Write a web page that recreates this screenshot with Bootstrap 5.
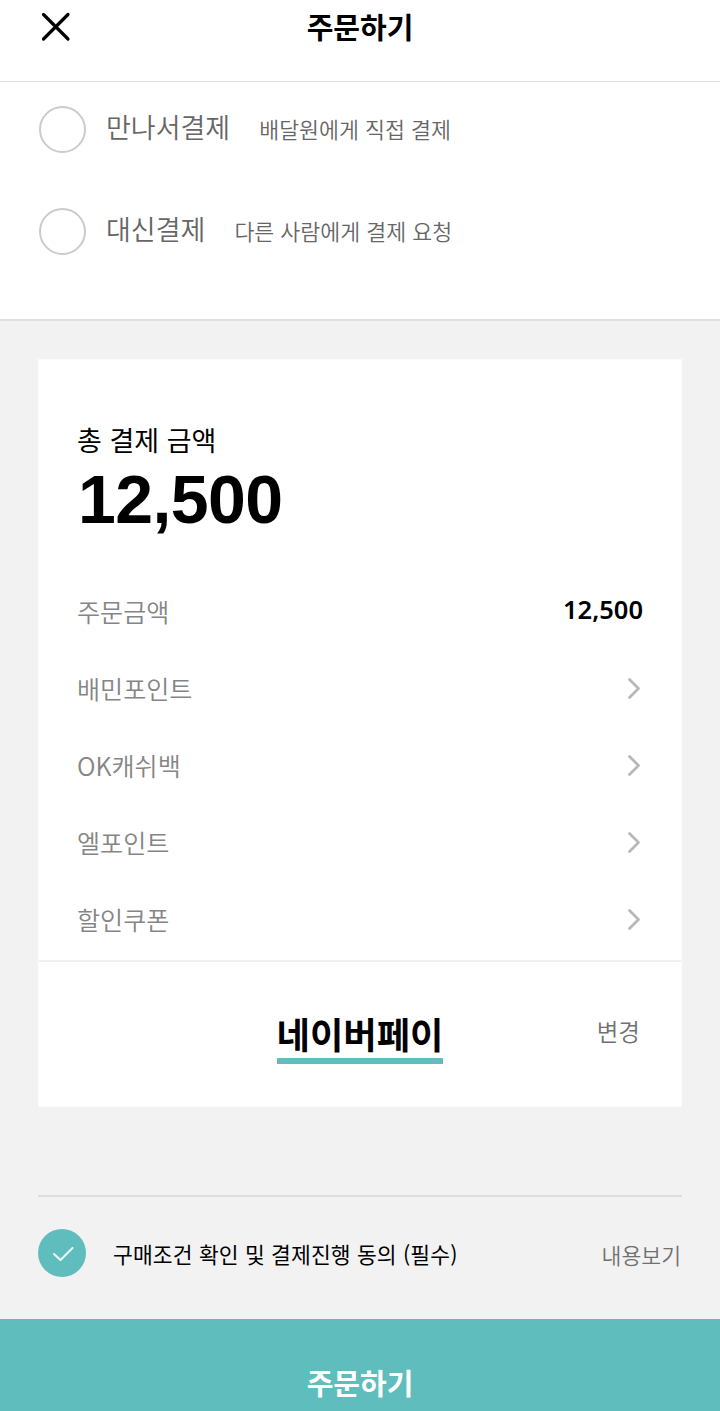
<!DOCTYPE html>
<html lang="ko">
<head>
<meta charset="utf-8">
<meta name="viewport" content="width=device-width, initial-scale=1">
<title>주문하기</title>
<link href="https://cdn.jsdelivr.net/npm/bootstrap@5.3.0/dist/css/bootstrap.min.css" rel="stylesheet">
<style>
body{font-family:"Noto Sans CJK KR","Noto Sans",sans-serif;background:#f2f2f2;color:#000;font-weight:350;line-height:1.5;overflow-x:hidden}
svg{display:block;fill:none;stroke-linecap:round;stroke-linejoin:round;flex:none}
.topbar{display:grid;grid-template-columns:1fr auto 1fr;height:82px;padding:6px 41px 0;border-bottom:1px solid #dedede}
.close-icon{margin-top:6px}
.bar-title{font-size:29px;line-height:40px;font-weight:700}
.pay-methods{height:239px;padding:24px 39px 0;border-bottom:2px solid #dfdfdf}
.pay-option{height:47px;margin-bottom:55px}
.ring{width:47px;height:47px;border:2px solid #cbcbcb;border-radius:50%;flex:none}
.pay-name{font-size:27px;line-height:42px;margin-left:20px;color:#666}
.pay-desc{font-size:21.7px;line-height:45px;margin-left:29px;color:#666}
.bill{margin:38px 38px 0;height:748px;border:1px solid #fbfbfb}
.bill-main{height:602px;padding:60px 38px 0;border-bottom:2px solid #f0f0f0}
.bill-label{font-size:27px;line-height:40px;font-weight:400}
.bill-total{font-family:"Liberation Sans",Arial,sans-serif;font-weight:700;font-size:68px;line-height:78px;letter-spacing:-.6px;margin-left:1px}
.bill-rows{margin-top:53px}
.bill-row{height:77px;font-size:25.1px;line-height:40px;color:#858585}
.bill-price{font-family:"Noto Sans",sans-serif;font-weight:600;font-size:25.5px;line-height:37px;color:#000}
.bill-change{display:grid;grid-template-columns:1fr auto 1fr;padding:46px 41px 0}
.pay-brand{font-size:36.3px;line-height:50px;font-weight:700;border-bottom:6px solid #5fbdbd;height:56px}
.change-link{font-size:23.5px;line-height:46px;color:#707070}
.agree{margin:88px 38px 0;height:124px;border-top:2px solid #dedede;padding-top:32px}
.tick{width:48px;height:48px;border-radius:50%;background:#5fbdbd;flex:none}
.agree-text{font-size:21.5px;line-height:50px;margin-left:27px;font-weight:400;letter-spacing:.15px}
.agree-more{font-size:21.6px;line-height:52px;color:#707070;margin-right:1px}
.order-btn{height:92px;background:#5fbdbd;color:#fff;padding-top:43px;overflow:hidden}
</style>
</head>
<body>
<header class="topbar bg-white">
  <svg class="close-icon" width="30" height="30" viewBox="0 0 30 30" stroke="#000" stroke-width="3.2"><path d="M2.5 2.5 27 27M27 2.5 2.5 27"/></svg>
  <div class="bar-title">주문하기</div>
</header>
<section class="pay-methods bg-white">
  <div class="pay-option d-flex"><span class="ring"></span><span class="pay-name">만나서결제</span><span class="pay-desc">배달원에게 직접 결제</span></div>
  <div class="pay-option d-flex"><span class="ring"></span><span class="pay-name">대신결제</span><span class="pay-desc">다른 사람에게 결제 요청</span></div>
</section>
<main>
  <section class="bill bg-white">
    <div class="bill-main">
      <div class="bill-label">총 결제 금액</div>
      <div class="bill-total">12,500</div>
      <div class="bill-rows">
        <div class="bill-row d-flex justify-content-between"><span>주문금액</span><span class="bill-price">12,500</span></div>
        <div class="bill-row d-flex justify-content-between"><span>배민포인트</span><svg width="16" height="40" stroke="#b8b8b8" stroke-width="2.8"><path d="M2.5 11.5 11.5 20.5 2.5 29.5"/></svg></div>
        <div class="bill-row d-flex justify-content-between"><span>OK캐쉬백</span><svg width="16" height="40" stroke="#b8b8b8" stroke-width="2.8"><path d="M2.5 11.5 11.5 20.5 2.5 29.5"/></svg></div>
        <div class="bill-row d-flex justify-content-between"><span>엘포인트</span><svg width="16" height="40" stroke="#b8b8b8" stroke-width="2.8"><path d="M2.5 11.5 11.5 20.5 2.5 29.5"/></svg></div>
        <div class="bill-row d-flex justify-content-between"><span>할인쿠폰</span><svg width="16" height="40" stroke="#b8b8b8" stroke-width="2.8"><path d="M2.5 11.5 11.5 20.5 2.5 29.5"/></svg></div>
      </div>
    </div>
    <div class="bill-change">
      <span></span><div class="pay-brand">네이버페이</div><div class="change-link text-end">변경</div>
    </div>
  </section>
  <section class="agree d-flex">
    <span class="tick d-flex align-items-center justify-content-center"><svg width="24" height="18" viewBox="0 0 24 18" stroke="#e6ffff" stroke-width="2"><path d="M4 10 10.5 16 22.5 4"/></svg></span>
    <span class="agree-text">구매조건 확인 및 결제진행 동의 (필수)</span>
    <span class="agree-more ms-auto">내용보기</span>
  </section>
</main>
<footer class="order-btn text-center"><div class="bar-title">주문하기</div></footer>
<script src="https://cdn.jsdelivr.net/npm/bootstrap@5.3.0/dist/js/bootstrap.bundle.min.js"></script>
</body>
</html>
